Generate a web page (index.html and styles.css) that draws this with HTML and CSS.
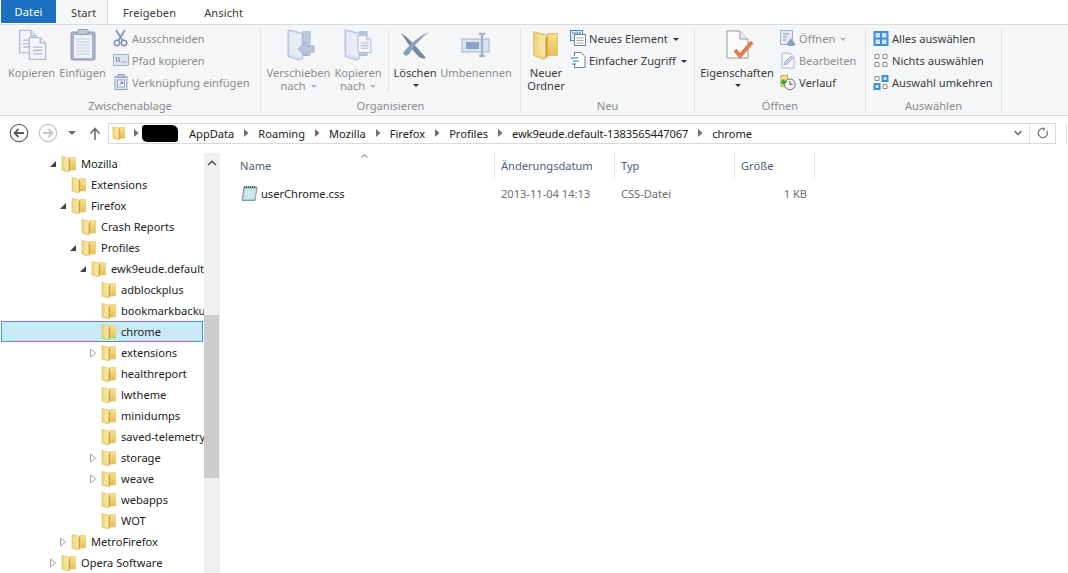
FILE: index.html
```html
<!DOCTYPE html>
<html lang="de">
<head>
<meta charset="utf-8">
<title>chrome</title>
<link rel="stylesheet" href="styles.css">
</head>
<body>
<svg class="defs" width="0" height="0" aria-hidden="true">
  <defs>
    <linearGradient id="fl" x1="0" y1="0" x2="1" y2="0"><stop offset="0" stop-color="#f2dc8e"/><stop offset="1" stop-color="#fbeeb4"/></linearGradient>
    <linearGradient id="fr" x1="0" y1="0" x2="0" y2="1"><stop offset="0" stop-color="#f8e391"/><stop offset="1" stop-color="#e6bd52"/></linearGradient>
    <symbol id="folder" viewBox="0 0 16 18">
      <path d="M1 1.500 9 3.500V15.500L7 17 1 15Z" fill="#f0d67c" stroke="#dcc272" stroke-width=".7"/>
      <path d="M9 2.500H14.500V15H9Z" fill="url(#fr)" stroke="#e0c26a" stroke-width=".6"/>
      <path d="M3 2.500 8.800 4V16L3 14.400Z" fill="url(#fl)"/>
      <path d="M9 3.500 7.600 5V16.500L9 15.500Z" fill="#cfa240"/>
    </symbol>
    <symbol id="tri-open" viewBox="0 0 8 8"><path d="M1 7H7V1Z" fill="#404040"/></symbol>
    <symbol id="tri-closed" viewBox="0 0 8 10"><path d="M1.500 1 6.500 5 1.500 9Z" fill="#fff" stroke="#a6a6a6"/></symbol>
    <symbol id="bc" viewBox="0 0 5 8"><path d="M0 0 4.500 4 0 8Z" fill="#6e6e6e"/></symbol>
    <symbol id="pfolder" viewBox="0 0 30 36">
      <path d="M2 2 18 6V33L14 35 2 31Z" fill="#d8e0ef" stroke="#a9b7d0"/>
      <path d="M18 4H26V30H18Z" fill="#bcc9df" stroke="#a9b7d0"/>
      <path d="M4 4 16 7V32L4 28Z" fill="#e7ecf5"/>
    </symbol>
    <symbol id="doc" viewBox="0 0 14 18"><path d="M1 1H9L13 5V17H1Z" fill="#f2f5fa" stroke="#b4c0d5"/><path d="M9 1V5H13" fill="#dfe6f2" stroke="#b4c0d5"/><path d="M3.500 8H10.500M3.500 10.500H10.500M3.500 13H10.500" stroke="#b3bccb"/></symbol>
  </defs>
</svg>

<nav class="tabs">
  <span class="tab tab-file">Datei</span>
  <span class="tab tab-active">Start</span>
  <span class="tab">Freigeben</span>
  <span class="tab">Ansicht</span>
</nav>

<section class="ribbon">
  <div class="group g1">
    <div class="group-body">
      <div class="large w-kop dim">
        <svg class="large-icon" width="30" height="34" viewBox="0 0 30 34"><use href="#doc" x="1" y="1" width="20" height="25"/><use href="#doc" x="11" y="8" width="19" height="25"/></svg>
        <span>Kopieren</span>
      </div>
      <div class="large w-einf dim">
        <svg class="large-icon" width="26" height="34" viewBox="0 0 26 34"><rect x="1" y="4" width="24" height="28" rx="1.500" fill="#a8b4c6" stroke="#8e9cb2"/><rect x="4" y="7" width="18" height="23" fill="#edf1f7"/><path d="M6 11H20M6 14H20M6 17H20M6 20H20M6 23H20M6 26H20" stroke="#c7d0de"/><rect x="8" y="1.500" width="10" height="5" rx="1" fill="#c0c8d4" stroke="#8e9cb2"/></svg>
        <span>Einfügen</span>
      </div>
      <div class="smalls dim s-clip">
        <div class="small"><svg width="16" height="18" viewBox="0 0 16 18"><path d="M3 1 10 12M12 1 5 12" stroke="#8d9aaf" stroke-width="2"/><circle cx="4" cy="14" r="2.700" fill="#eef1f5" stroke="#7f93b4" stroke-width="1.500"/><circle cx="11" cy="14" r="2.700" fill="#eef1f5" stroke="#7f93b4" stroke-width="1.500"/></svg><span>Ausschneiden</span></div>
        <div class="small"><svg width="16" height="12" viewBox="0 0 16 12"><rect x=".5" y=".5" width="15" height="11" fill="#dfe6f1" stroke="#a3b2cb"/><path d="M3 3 4 8M5.500 3 6.500 8" stroke="#5f7ca8"/><path d="M8.500 8H9.500M10.500 8H11.500M12.500 8H13.500" stroke="#5f7ca8"/></svg><span>Pfad kopieren</span></div>
        <div class="small"><svg width="14" height="16" viewBox="0 0 14 16"><rect x="1" y="2.500" width="12" height="13" fill="#dfe6f1" stroke="#93a3bd"/><rect x="4" y=".5" width="6" height="3" fill="#c3ccd9" stroke="#93a3bd"/><rect x="3.500" y="6" width="7" height="7" fill="#fff" stroke="#93a3bd"/><path d="M5.500 11 8.500 8M6.500 8H8.500V10" stroke="#4f6d99" fill="none"/></svg><span>Verknüpfung einfügen</span></div>
      </div>
    </div>
    <div class="group-label">Zwischenablage</div>
  </div>

  <div class="group g2">
    <div class="group-body">
      <div class="large w-ver dim">
        <svg class="large-icon" width="30" height="34" viewBox="0 0 30 34"><use href="#pfolder" width="28" height="33"/><path d="M12 21 20 14V18H28V24H20V28Z" fill="#b9c6dc" stroke="#9fafc9"/></svg>
        <span>Verschieben</span><span>nach <i class="caret caret-light"></i></span>
      </div>
      <div class="large w-kon dim">
        <svg class="large-icon" width="30" height="34" viewBox="0 0 30 34"><use href="#pfolder" width="28" height="33"/><use href="#doc" x="14" y="6" width="15" height="20"/></svg>
        <span>Kopieren</span><span>nach <i class="caret caret-light"></i></span>
      </div>
      <div class="vsep"></div>
      <div class="large w-los">
        <svg class="large-icon" width="30" height="28" viewBox="0 0 30 28"><path d="M1 2C8 6 20 20 26 27 22 28 20 27 17 24 11 17 6 10 1 2Z" fill="#7487a6"/><path d="M29 1C20 4 8 15 3 22 5 26 8 25 10 22 14 15 21 7 29 1Z" fill="#8fa0ba"/></svg>
        <span>Löschen</span><i class="caret"></i>
      </div>
      <div class="large w-umb dim">
        <svg class="large-icon" width="30" height="28" viewBox="0 0 30 28"><rect x="1" y="8" width="27" height="13" fill="#dbe3ef" stroke="#a3b2cb"/><rect x="5" y="11" width="13" height="7" fill="#8da2c3"/><path d="M18 3H24M18 25H24M21 3V25" stroke="#a3b2cb" stroke-width="2.500" fill="none"/></svg>
        <span>Umbenennen</span>
      </div>
    </div>
    <div class="group-label">Organisieren</div>
  </div>

  <div class="group g3">
    <div class="group-body">
      <div class="large w-neu">
        <svg class="large-icon" width="28" height="34" viewBox="0 0 16 18"><use href="#folder" width="16" height="18"/></svg>
        <span>Neuer</span><span>Ordner</span>
      </div>
      <div class="smalls s-neu">
        <div class="small"><svg width="16" height="16" viewBox="0 0 16 16"><rect x=".5" y=".5" width="12" height="10" fill="#d9e8f5" stroke="#4f88b8"/><path d="M2 3H11" stroke="#4f88b8"/><rect x="4.500" y="4.500" width="11" height="11" fill="#fff" stroke="#7a8799"/><path d="M6.500 8H13.500M6.500 10.500H13.500M6.500 13H13.500" stroke="#9aa6b6"/></svg><span>Neues Element <i class="caret"></i></span></div>
        <div class="small"><svg width="16" height="16" viewBox="0 0 16 16"><path d="M4.500 4V.5H11L15 4.500V15.500H4.500V12" fill="#fff" stroke="#6f7c8d"/><path d="M1 6H8M3 9H9M2 12H6" stroke="#2b7cc7" stroke-width="1.200"/></svg><span>Einfacher Zugriff <i class="caret"></i></span></div>
      </div>
    </div>
    <div class="group-label">Neu</div>
  </div>

  <div class="group g4">
    <div class="group-body">
      <div class="large w-eig">
        <svg class="large-icon" width="28" height="30" viewBox="0 0 28 30"><path d="M1 1H14L22 9V28H1Z" fill="#fbfbfb" stroke="#9a9a9a"/><path d="M14 1V9H22" fill="#eee" stroke="#9a9a9a"/><path d="M9 20 14 26 26 12" fill="none" stroke="#e67a4c" stroke-width="4"/></svg>
        <span>Eigenschaften</span><i class="caret"></i>
      </div>
      <div class="smalls s-off">
        <div class="small dim"><svg width="16" height="16" viewBox="0 0 16 16"><rect x=".5" y=".5" width="12" height="14" fill="#e6ebf3" stroke="#a3b2cb"/><path d="M3 4H9M3 7H7M3 10H6" stroke="#8197ba"/><path d="M6 15 11 8 16 15H14V16H8V15Z" fill="#8ca2c4"/></svg><span>Öffnen <i class="caret caret-light"></i></span></div>
        <div class="small dim"><svg width="16" height="17" viewBox="0 0 16 17"><path d="M2 1H10L14 5V16H2Z" fill="#f4f6fa" stroke="#a9b7d0"/><path d="M4 13 5 10 11 4 13 6 7 12Z" fill="#c5d2e6" stroke="#8da2c3" stroke-width=".7"/></svg><span>Bearbeiten</span></div>
        <div class="small"><svg width="17" height="17" viewBox="0 0 17 17"><path d="M1 1H8V13H1Z" fill="#f2dc85" stroke="#cda93f"/><circle cx="10.500" cy="10.500" r="5.700" fill="#f3f3f3" stroke="#6b6b6b"/><path d="M10.500 7V10.500H13.500" stroke="#555" fill="none"/><path d="M2 8H7M4.500 5.500 2 8 4.500 10.500" stroke="#3aa52f" stroke-width="2" fill="none"/></svg><span>Verlauf</span></div>
      </div>
    </div>
    <div class="group-label">Öffnen</div>
  </div>

  <div class="group g5">
    <div class="group-body">
      <div class="smalls s-aus">
        <div class="small"><svg width="15" height="15" viewBox="0 0 15 15"><path d="M0 0H15V15H0Z" fill="#3d8fd6"/><path d="M2 2H6.500V6.500H2ZM8.500 2H13V6.500H8.500ZM2 8.500H6.500V13H2ZM8.500 8.500H13V13H8.500Z" fill="#cfe4f7"/></svg><span>Alles auswählen</span></div>
        <div class="small"><svg width="15" height="15" viewBox="0 0 15 15"><path d="M1.500 1.500H5.500V5.500H1.500ZM9.500 1.500H13.500V5.500H9.500ZM1.500 9.500H5.500V13.500H1.500ZM9.500 9.500H13.500V13.500H9.500Z" fill="#fff" stroke="#8c8c8c"/></svg><span>Nichts auswählen</span></div>
        <div class="small"><svg width="15" height="15" viewBox="0 0 15 15"><path d="M1.500 1.500H5.500V5.500H1.500ZM9.500 9.500H13.500V13.500H9.500Z" fill="#fff" stroke="#8c8c8c"/><path d="M8 0H15V7H8ZM0 8H7V15H0Z" fill="#3d8fd6"/><path d="M10 2H13V5H10ZM2 10H5V13H2Z" fill="#cfe4f7"/></svg><span>Auswahl umkehren</span></div>
      </div>
    </div>
    <div class="group-label">Auswählen</div>
  </div>
</section>

<section class="addressbar">
  <svg class="nav-back" width="20" height="20" viewBox="0 0 20 20"><circle cx="10" cy="10" r="8.700" fill="#fff" stroke="#6d6d6d" stroke-width="1.300"/><path d="M15 10H6M9.500 6 5.500 10 9.500 14" fill="none" stroke="#5a5a5a" stroke-width="1.800"/></svg>
  <svg class="nav-forward" width="20" height="20" viewBox="0 0 20 20"><circle cx="10" cy="10" r="8.700" fill="#fff" stroke="#c6c6c6" stroke-width="1.300"/><path d="M5 10H14M10.500 6 14.500 10 10.500 14" fill="none" stroke="#c6c6c6" stroke-width="1.800"/></svg>
  <svg class="nav-down" width="8" height="4" viewBox="0 0 8 4"><path d="M0 0H8L4 4Z" fill="#6e6e6e"/></svg>
  <svg class="nav-up" width="12" height="13" viewBox="0 0 12 13"><path d="M6 13V2M1.500 6.500 6 1.500 10.500 6.500" fill="none" stroke="#6e6e6e" stroke-width="1.600"/></svg>
  <div class="address">
    <div class="crumbs">
      <svg class="crumb-folder" width="14" height="16" viewBox="0 0 16 18"><use href="#folder" width="16" height="18"/></svg>
      <svg class="sep-first" width="5" height="8"><use href="#bc" width="5" height="8"/></svg>
      <span class="redact"></span>
      <span class="crumb">AppData</span>
      <svg class="sep" width="5" height="8"><use href="#bc" width="5" height="8"/></svg>
      <span class="crumb">Roaming</span>
      <svg class="sep" width="5" height="8"><use href="#bc" width="5" height="8"/></svg>
      <span class="crumb">Mozilla</span>
      <svg class="sep" width="5" height="8"><use href="#bc" width="5" height="8"/></svg>
      <span class="crumb">Firefox</span>
      <svg class="sep" width="5" height="8"><use href="#bc" width="5" height="8"/></svg>
      <span class="crumb">Profiles</span>
      <svg class="sep" width="5" height="8"><use href="#bc" width="5" height="8"/></svg>
      <span class="crumb crumb-long">ewk9eude.default-1383565447067</span>
      <svg class="sep" width="5" height="8"><use href="#bc" width="5" height="8"/></svg>
      <span class="crumb">chrome</span>
    </div>
    <svg class="addr-drop" width="8" height="6" viewBox="0 0 8 6"><path d="M.5 1 4 4.500 7.500 1" fill="none" stroke="#666" stroke-width="1.500"/></svg>
    <div class="addr-refresh"><svg width="12" height="12" viewBox="0 0 12 12"><path d="M9.800 3.500A4.600 4.600 0 1 1 6 1.400" fill="none" stroke="#7a7a7a" stroke-width="1.300"/><path d="M6 0V4L8.500 2Z" fill="#7a7a7a"/></svg></div>
  </div>
  <div class="search-edge"></div>
</section>

<main class="panes">
  <div class="tree">
    <div class="node d0"><svg class="tw tw-open" width="8" height="8"><use href="#tri-open" width="8" height="8"/></svg><svg class="fo" width="16" height="18"><use href="#folder" width="16" height="18"/></svg><span>Mozilla</span></div>
    <div class="node d1"><span class="tw"></span><svg class="fo" width="16" height="18"><use href="#folder" width="16" height="18"/></svg><span>Extensions</span></div>
    <div class="node d1"><svg class="tw tw-open" width="8" height="8"><use href="#tri-open" width="8" height="8"/></svg><svg class="fo" width="16" height="18"><use href="#folder" width="16" height="18"/></svg><span>Firefox</span></div>
    <div class="node d2"><span class="tw"></span><svg class="fo" width="16" height="18"><use href="#folder" width="16" height="18"/></svg><span>Crash Reports</span></div>
    <div class="node d2"><svg class="tw tw-open" width="8" height="8"><use href="#tri-open" width="8" height="8"/></svg><svg class="fo" width="16" height="18"><use href="#folder" width="16" height="18"/></svg><span>Profiles</span></div>
    <div class="node d3"><svg class="tw tw-open" width="8" height="8"><use href="#tri-open" width="8" height="8"/></svg><svg class="fo" width="16" height="18"><use href="#folder" width="16" height="18"/></svg><span>ewk9eude.default</span></div>
    <div class="node d4"><span class="tw"></span><svg class="fo" width="16" height="18"><use href="#folder" width="16" height="18"/></svg><span>adblockplus</span></div>
    <div class="node d4"><span class="tw"></span><svg class="fo" width="16" height="18"><use href="#folder" width="16" height="18"/></svg><span>bookmarkbacku</span></div>
    <div class="node d4 selected"><span class="tw"></span><svg class="fo" width="16" height="18"><use href="#folder" width="16" height="18"/></svg><span>chrome</span></div>
    <div class="node d4"><svg class="tw" width="8" height="10"><use href="#tri-closed" width="8" height="10"/></svg><svg class="fo" width="16" height="18"><use href="#folder" width="16" height="18"/></svg><span>extensions</span></div>
    <div class="node d4"><span class="tw"></span><svg class="fo" width="16" height="18"><use href="#folder" width="16" height="18"/></svg><span>healthreport</span></div>
    <div class="node d4"><span class="tw"></span><svg class="fo" width="16" height="18"><use href="#folder" width="16" height="18"/></svg><span>lwtheme</span></div>
    <div class="node d4"><span class="tw"></span><svg class="fo" width="16" height="18"><use href="#folder" width="16" height="18"/></svg><span>minidumps</span></div>
    <div class="node d4"><span class="tw"></span><svg class="fo" width="16" height="18"><use href="#folder" width="16" height="18"/></svg><span>saved-telemetry</span></div>
    <div class="node d4"><svg class="tw" width="8" height="10"><use href="#tri-closed" width="8" height="10"/></svg><svg class="fo" width="16" height="18"><use href="#folder" width="16" height="18"/></svg><span>storage</span></div>
    <div class="node d4"><svg class="tw" width="8" height="10"><use href="#tri-closed" width="8" height="10"/></svg><svg class="fo" width="16" height="18"><use href="#folder" width="16" height="18"/></svg><span>weave</span></div>
    <div class="node d4"><span class="tw"></span><svg class="fo" width="16" height="18"><use href="#folder" width="16" height="18"/></svg><span>webapps</span></div>
    <div class="node d4"><span class="tw"></span><svg class="fo" width="16" height="18"><use href="#folder" width="16" height="18"/></svg><span>WOT</span></div>
    <div class="node d1"><svg class="tw" width="8" height="10"><use href="#tri-closed" width="8" height="10"/></svg><svg class="fo" width="16" height="18"><use href="#folder" width="16" height="18"/></svg><span>MetroFirefox</span></div>
    <div class="node d0"><svg class="tw" width="8" height="10"><use href="#tri-closed" width="8" height="10"/></svg><svg class="fo" width="16" height="18"><use href="#folder" width="16" height="18"/></svg><span>Opera Software</span></div>
  </div>
  <div class="scrollbar">
    <svg class="sb-up" width="10" height="6" viewBox="0 0 10 6"><path d="M1 5 5 1.300 9 5" fill="none" stroke="#555" stroke-width="1.600"/></svg>
    <div class="sb-thumb"></div>
  </div>
  <div class="files">
    <div class="file-head">
      <div class="col c-name">Name<svg class="sort" width="7" height="4" viewBox="0 0 7 4"><path d="M.5 3.700 3.500.5 6.500 3.700" fill="none" stroke="#8fa2b8" stroke-width="1.200"/></svg></div>
      <div class="col c-date">Änderungsdatum</div>
      <div class="col c-type">Typ</div>
      <div class="col c-size">Größe</div>
    </div>
    <div class="file-row">
      <div class="c-name cell-name"><svg width="17" height="17" viewBox="0 0 17 17"><path d="M3 2H16L14 15.500H1Z" fill="#9fcbd8" stroke="#7f98a4"/><path d="M4 4H15L13.500 14H2.500Z" fill="#cfe5ec"/><path d="M3.500 1V3M5.500 1V3M7.500 1V3M9.500 1V3M11.500 1V3M13.500 1V3" stroke="#555"/></svg><span>userChrome.css</span></div>
      <div class="c-date cell">2013-11-04 14:13</div>
      <div class="c-type cell">CSS-Datei</div>
      <div class="c-size cell cell-size">1 KB</div>
    </div>
  </div>
</main>
</body>
</html>
```

FILE: styles.css
```css
* { box-sizing: border-box; }
html, body { height: 100%; }
body {
  margin: 0;
  background: #fff;
  color: #2b2b2b;
  font: 11.1px/13px "Noto Sans", "Liberation Sans", sans-serif;
  overflow: hidden;
}
.defs { position: absolute; }
svg { display: block; flex: none; }

/* Tabs */
.tabs { display: flex; height: 24px; padding-left: 1px; }
.tab { height: 24px; padding: 6px 14px 0; color: #3b3b3b; letter-spacing: .1px; }
.tab-file { width: 55px; height: 23px; padding: 5px 0 0; background: #1a6fc0; color: #fff; text-align: center; }
.tab-active { width: 52px; padding: 6px 0 0 15px; background: #f5f6f7; border-right: 1px solid #dadbdc; }
.tabs .tab:nth-child(3) { padding-left: 15px; }

/* Ribbon */
.ribbon {
  display: flex;
  height: 92px;
  background: #f5f6f7;
  border-top: 1px solid #dadbdc;
  border-bottom: 1px solid #dadbdc;
  padding-top: 3px;
}
.group { display: flex; flex-direction: column; height: 85px; border-right: 1px solid #e3e4e6; }
.g1 { width: 261px; }
.g2 { width: 260px; }
.g3 { width: 174px; }
.g4 { width: 171px; }
.g5 { width: 136px; }
.group-body { display: flex; flex: 1; }
.group-label { height: 14px; text-align: center; color: #8c8c8c; }
.dim { color: #8d8d8d; }

.large { display: flex; flex-direction: column; align-items: center; white-space: nowrap; color: #3b3b3b; }
.large.dim { color: #8d8d8d; }
.large-icon { height: 34px; margin-bottom: 4px; }
.w-kop { width: 47px; margin-left: 8px; }
.w-einf { width: 47px; margin-left: 4px; }
.w-ver { width: 63px; margin-left: 6px; }
.w-ver .large-icon { margin-left: 5px; }
.w-kon { width: 46px; margin-left: 5px; }
.vsep { width: 1px; height: 62px; margin: 2px 5px 0 7px; background: #e3e4e6; }
.w-los { width: 42px; }
.w-umb { width: 70px; margin-left: 5px; }
.w-neu { width: 50px; margin-left: 0; }
.w-eig { width: 74px; margin-left: 5px; }
.w-los .large-icon, .w-umb .large-icon { height: 28px; margin: 3px 0 7px; }
.w-eig .large-icon { height: 30px; margin: 2px 0 6px 6px; }
.w-eig .caret, .w-los .caret { margin-top: 5px; }

.smalls { display: flex; flex-direction: column; gap: 2px; }
.s-clip { margin-left: 7px; }
.s-neu { margin-left: -1px; }
.s-off { margin-left: 6px; }
.s-aus { margin-left: 7px; }
.small { display: flex; align-items: center; gap: 3px; height: 20px; white-space: nowrap; color: #3b3b3b; }
.small.dim, .dim .small { color: #8d8d8d; }
.small svg { width: 16px; }

.caret {
  display: inline-block;
  width: 0;
  height: 0;
  margin-left: 2px;
  vertical-align: 2px;
  border: 3px solid transparent;
  border-top: 3px solid #333;
  border-bottom: 0;
}
.caret-light { border-top-color: #b5b5b5; }

/* Address bar */
.addressbar { display: flex; align-items: center; height: 34px; padding-left: 9px; }
.nav-forward { margin-left: 9px; }
.nav-down { margin-left: 10px; }
.nav-up { margin-left: 13px; }
.address {
  display: flex;
  align-items: center;
  width: 948px;
  height: 21px;
  margin-left: 7px;
  border: 1px solid #d9d9d9;
  background: #fff;
}
.crumbs { display: flex; align-items: center; flex: 1; padding-left: 3px; color: #222; white-space: nowrap; }
.sep-first { margin-left: 8px; }
.redact { width: 36px; height: 17px; margin: 0 11px 0 3px; background: #000; border-radius: 3px 6px 3px 5px; }
.sep { margin: 0 9px 0 10px; }
.crumb-long { letter-spacing: -.1px; }
.addr-drop { margin-right: 7px; }
.addr-refresh { display: flex; align-items: center; justify-content: center; width: 26px; height: 19px; border-left: 1px solid #e2e2e2; }
.search-edge { width: 1px; height: 21px; margin-left: 10px; background: #e6e6e6; }

/* Panes */
.panes { display: flex; height: 423px; }
.tree { width: 204px; padding-top: 3px; overflow: hidden; }
.node { display: flex; align-items: center; height: 21px; white-space: nowrap; color: #222; overflow: hidden; }
.tw { flex: none; width: 8px; margin-right: 4px; }
.fo { margin-right: 4px; }
.d0 { padding-left: 49px; }
.d1 { padding-left: 59px; }
.d2 { padding-left: 69px; }
.d3 { padding-left: 79px; }
.d4 { padding-left: 89px; }
.selected { margin-left: 1px; width: 202px; padding-left: 87px; background: #cce8f6; border: 1px solid #36a0cf; }
.scrollbar { position: relative; width: 16px; margin-top: 3px; background: #f0f0f0; }
.sb-up { margin: 7px auto 0 3px; }
.sb-thumb { position: absolute; top: 162px; left: 0; width: 15px; height: 163px; background: #cdcdcd; }

.files { flex: 1; padding-left: 14px; }
.file-head { display: flex; height: 27px; margin-top: 2px; }
.col { position: relative; padding: 7px 0 0 6px; color: #4c607a; border-right: 1px solid #e5e5e5; }
.c-name { width: 261px; }
.c-date, .c-type { width: 120px; }
.c-size { width: 80px; }
.sort { position: absolute; top: 2px; left: 127px; }
.file-row { display: flex; align-items: center; height: 22px; margin-top: 3px; }
.cell-name { display: flex; align-items: center; gap: 3px; padding-left: 7px; color: #222; }
.cell { padding-left: 6px; color: #6d6d6d; }
.cell-size { padding-right: 8px; text-align: right; }
```
